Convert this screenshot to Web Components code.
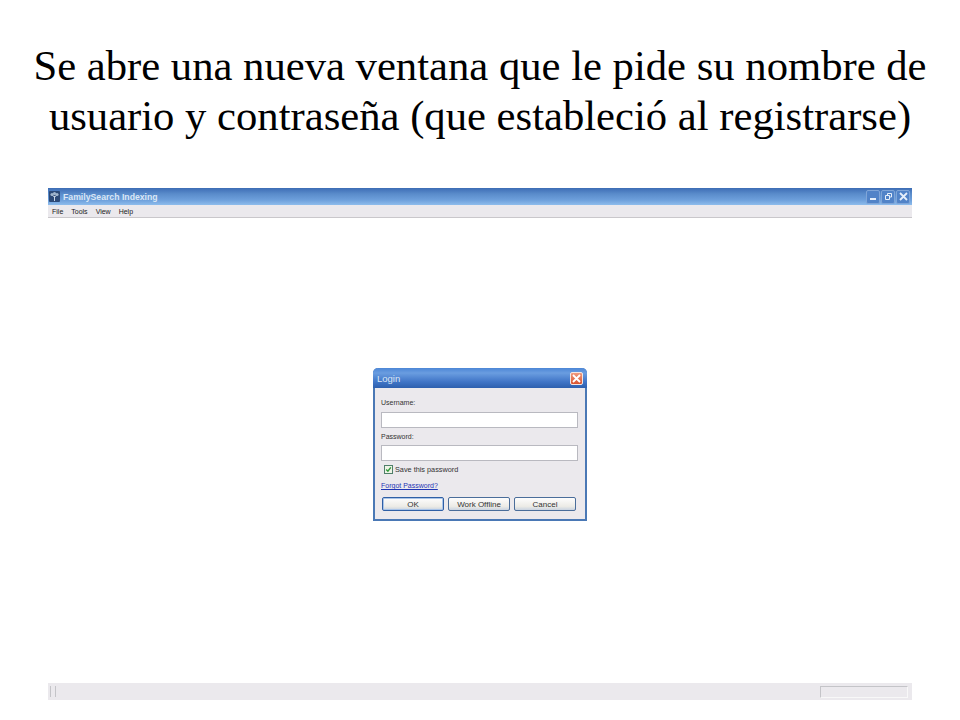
<!DOCTYPE html>
<html>
<head>
<meta charset="utf-8">
<title>Login</title>
<style>
  html, body { margin: 0; padding: 0; background: #fff; }
  body { width: 960px; height: 720px; overflow: hidden; }
</style>
</head>
<body>
<slide-page>
  <span slot="title">Se abre una nueva ventana que le pide su nombre de<br>usuario y contraseña (que estableció al registrarse)</span>
  <app-window>
    <login-dialog></login-dialog>
  </app-window>
</slide-page>

<script>
class SlidePage extends HTMLElement {
  constructor() {
    super();
    this.attachShadow({ mode: 'open' });
    this.shadowRoot.innerHTML = `
      <style>
        :host { display: flex; flex-direction: column; width: 960px; height: 720px; box-sizing: border-box; padding: 41px 48px 20px; }
        h1 {
          margin: 0 -30px 48px;
          height: 99px;
          font: normal 42.67px/50px "Liberation Serif", serif;
          color: #000;
          text-align: center;
          white-space: nowrap;
        }
      </style>
      <h1><slot name="title"></slot></h1>
      <slot></slot>
    `;
  }
}

class AppWindow extends HTMLElement {
  constructor() {
    super();
    this.attachShadow({ mode: 'open' });
    this.shadowRoot.innerHTML = `
      <style>
        :host { display: flex; flex-direction: column; flex: 1; min-height: 0; font: 7px "Liberation Sans", sans-serif; color: #222; }
        .title {
          height: 17px; display: flex; align-items: center; gap: 3px; padding: 0 2px 0 1px;
          background: linear-gradient(#3d6db5 0, #5a8ccb 35%, #6d9fdb 70%, #8dbcec 100%);
          color: #dbe7f6; font-weight: bold; font-size: 8.7px;
        }
        .title svg.logo { width: 11px; height: 11px; }
        .title span { flex: 1; }
        .ctl { display: flex; gap: 1px; }
        .ctl b {
          width: 14px; height: 14px; box-sizing: border-box; display: flex; border: 1px solid #7fa5d8; border-radius: 2px;
          background: #5183c8; align-items: center; justify-content: center;
        }
        .ctl svg { width: 9px; height: 9px; }
        .menu {
          height: 13px; display: flex; align-items: center; gap: 8px; padding: 0 4px;
          background: #ebe9ed; border-bottom: 1px solid #c9c7cb; box-sizing: border-box;
        }
        .body { flex: 1; display: flex; justify-content: center; align-items: flex-start; padding: 150px 0 0; background: #fff; }
        .status {
          height: 17px; display: flex; align-items: center; justify-content: space-between; box-sizing: border-box;
          background: #ebe9ed; padding: 0 4px 0 2px;
        }
        .grip { width: 4px; height: 11px; border-left: 1px solid #c4c4c8; border-right: 1px solid #c4c4c8; }
        .cell { width: 88px; height: 12px; box-sizing: border-box; border: 1px solid #f8f8f8; border-left-color: #c4c4c8; border-top-color: #c4c4c8; }
      </style>
      <div class="title">
        <svg class="logo" viewBox="0 0 11 11">
          <rect width="11" height="11" rx="1" fill="#2c4a78"/>
          <path d="M5.5 10V5M5.5 6L3 4M5.5 6L8 4" stroke="#c9d6e6" stroke-width="1" fill="none"/>
          <circle cx="3" cy="3.5" r="1.6" fill="#9fb4cc"/><circle cx="8" cy="3.5" r="1.6" fill="#9fb4cc"/><circle cx="5.5" cy="2.6" r="1.6" fill="#9fb4cc"/>
        </svg>
        <span>FamilySearch Indexing</span>
        <div class="ctl">
          <b><svg viewBox="0 0 9 9"><rect x="1" y="6" width="6" height="2" fill="#e6effa"/></svg></b>
          <b><svg viewBox="0 0 9 9"><path d="M3.5 3V1.5H7.5V5H6M1.5 3.5H5.5V7.5H1.5Z" stroke="#e6effa" fill="none"/></svg></b>
          <b><svg viewBox="0 0 9 9"><path d="M1 1L8 8M8 1L1 8" stroke="#e6effa" stroke-width="1.8"/></svg></b>
        </div>
      </div>
      <div class="menu"><span>File</span><span>Tools</span><span>View</span><span>Help</span></div>
      <div class="body"><slot></slot></div>
      <div class="status"><div class="grip"></div><div class="cell"></div></div>
    `;
  }
}

class LoginDialog extends HTMLElement {
  constructor() {
    super();
    this.attachShadow({ mode: 'open' });
    this.shadowRoot.innerHTML = `
      <style>
        :host {
          display: flex; flex-direction: column; width: 214px; height: 153px; box-sizing: border-box;
          background: #ebe9ed; border: 2px solid #4a78b5; border-top: 0; border-radius: 5px 5px 0 0;
          font: 7px "Liberation Sans", sans-serif; color: #333;
        }
        .bar {
          height: 20px; margin: 0 -2px; display: flex; align-items: center; justify-content: space-between; padding: 0 4px;
          border-radius: 5px 5px 0 0; color: #dbe7f6; font-size: 9.5px;
          background: linear-gradient(#4c86d6 0, #6a9de0 25%, #3f74c6 70%, #2d5fae 100%);
        }
        .close {
          width: 13px; height: 13px; border-radius: 2px; display: flex; align-items: center; justify-content: center;
          background: linear-gradient(#ef9a7e, #d9532f); border: 1px solid #f2e6e2; box-sizing: border-box;
        }
        .close svg { width: 9px; height: 9px; }
        .form { flex: 1; display: flex; flex-direction: column; padding: 10px 7px 0 6px; }
        label { height: 10px; line-height: 10px; }
        .field { height: 16px; box-sizing: border-box; background: #fff; border: 1px solid #b9b9c0; }
        .user { margin: 4px 0; }
        .pass { margin: 3px 0 0; }
        .check { display: flex; align-items: center; gap: 2px; margin: 3px 0 0 3px; height: 10px; font-size: 7.3px; }
        .box { width: 9px; height: 9px; box-sizing: border-box; border: 1px solid #4f7f6a; background: #eef3e6; display: flex; }
        .box svg { width: 7px; height: 7px; }
        a { margin-top: 7px; height: 10px; line-height: 10px; color: #1f35b5; text-decoration: underline; }
        .buttons { display: flex; gap: 4px; margin: 6px 0 0 1px; font-size: 8px; }
        .btn {
          width: 62px; height: 14px; box-sizing: border-box; display: flex; align-items: center; justify-content: center;
          border: 1px solid #4a6d9a; border-radius: 2px; background: linear-gradient(#fdfdfd, #ecebe6 70%, #c9d3e0);
        }
        .btn.def { border: 1px solid #2f5fa5; box-shadow: inset 0 0 0 1px #a9c4e8; }
      </style>
      <div class="bar">
        <span>Login</span>
        <div class="close"><svg viewBox="0 0 9 9"><path d="M1 1L8 8M8 1L1 8" stroke="#fff" stroke-width="1.8"/></svg></div>
      </div>
      <div class="form">
        <label>Username:</label>
        <div class="field user"></div>
        <label>Password:</label>
        <div class="field pass"></div>
        <div class="check">
          <div class="box"><svg viewBox="0 0 6 6"><path d="M1 3L2.5 4.5L5 1.2" stroke="#2f9a3a" stroke-width="1.2" fill="none"/></svg></div>
          <span>Save this password</span>
        </div>
        <a>Forgot Password?</a>
        <div class="buttons">
          <div class="btn def">OK</div>
          <div class="btn">Work Offline</div>
          <div class="btn">Cancel</div>
        </div>
      </div>
    `;
  }
}

customElements.define('slide-page', SlidePage);
customElements.define('app-window', AppWindow);
customElements.define('login-dialog', LoginDialog);
</script>
</body>
</html>
